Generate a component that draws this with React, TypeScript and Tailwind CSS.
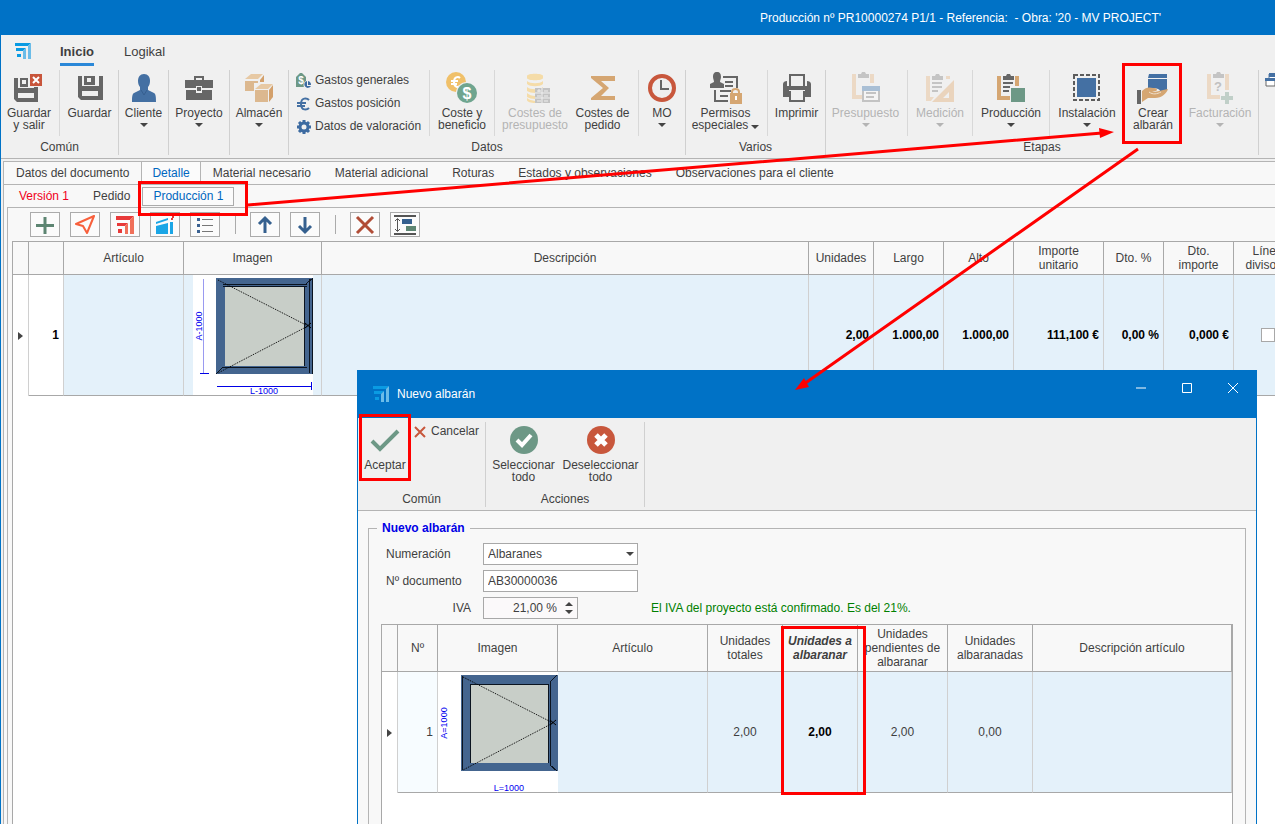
import React from 'react';

type Kids = { children?: React.ReactNode };

function Svg({ w = 32, h = 32, children }: Kids & { w?: number; h?: number }) {
  return (
    <svg width={w} height={h} viewBox={`0 0 ${w} ${h}`} className="block shrink-0" aria-hidden="true">
      {children}
    </svg>
  );
}

function Logo() {
  return (
    <Svg w={16} h={16}>
      <path d="M0 0h16l-3 3H0z" fill="#0a9be3" />
      <path d="M16 0v16h-3V3z" fill="#6bbce8" />
      <path d="M1 5h10l-3 3H1z" fill="#0a9be3" />
      <path d="M11 5v11H8V8z" fill="#6bbce8" />
      <path d="M2 11h4v3H2z" fill="#0a9be3" />
    </Svg>
  );
}

const SaveIcon = () => (
  <Svg>
    <path d="M4 4h4v10h17V4h4v24H7l-3-3z" fill="#666" />
    <path d="M10 4h11v9H10z" fill="#666" />
    <path d="M13 6h4v4h-4z" fill="#efefef" />
    <path d="M8 19h16v5H8z" fill="#efefef" />
  </Svg>
);

const SaveExitIcon = () => (
  <Svg>
    <path d="M1 6h4v10h16v-1h4v15H4l-3-3z" fill="#666" />
    <path d="M7 6h8v9H7z" fill="#666" />
    <path d="M9 8h4v4H9z" fill="#efefef" />
    <path d="M5 21h16v5H5z" fill="#efefef" />
    <path d="M16 1h14v14H16z" fill="#efefef" />
    <path d="M17 2h12v12H17z" fill="#c8553b" />
    <path d="M20 5l6 6M26 5l-6 6" stroke="#fff" strokeWidth="2" />
  </Svg>
);

const PersonIcon = () => (
  <Svg>
    <path d="M16 2c4 0 6 3 6 7 0 3-1 5-2 6v3l6 3c2 1 2 5 2 9H4c0-4 0-8 2-9l6-3v-3c-1-1-2-3-2-6 0-4 2-7 6-7z" fill="#4470a3" />
    <path d="M13 18l3 5 3-5" fill="none" stroke="#365f90" />
  </Svg>
);

const CaseIcon = () => (
  <Svg>
    <path d="M12 8V5h8v3" fill="none" stroke="#666" strokeWidth="2" />
    <path d="M2 8h28v8H19v-2h-6v2H2zM3 18h10v3h6v-3h10v10H3z" fill="#666" />
    <path d="M14 15h4v4h-4z" fill="#666" />
  </Svg>
);

const BoxesIcon = () => (
  <Svg>
    <path d="M2 7l6-5h12l-5 5z" fill="#e7c9a4" />
    <path d="M2 9h13v10H2z" fill="#dcb88f" />
    <path d="M17 8l4-5v7h-4z" fill="#d3a06b" />
    <path d="M11 11h20v20H11z" fill="#f0f0f0" />
    <path d="M12 17l6-5h12l-5 5z" fill="#e7c9a4" />
    <path d="M12 18h13v12H12z" fill="#dcb88f" />
    <path d="M26 18l4-5v12l-4 5z" fill="#d3a06b" />
  </Svg>
);

const CoinText = ({ x, y, c, s, f = '#fff' }: { x: number; y: number; c: string; s: number; f?: string }) => (
  <text x={x} y={y} fontSize={s} fontWeight="700" textAnchor="middle" fill={f} fontFamily="Liberation Sans, sans-serif">
    {c}
  </text>
);

const TagMoneyIcon = () => (
  <Svg w={16} h={16}>
    <path d="M0 4l4-4h2l4 4v10H0z" fill="#6d9886" />
    <CoinText x={5} y={11} c="$" s={10} />
    <circle cx="12" cy="12" r="4.500" fill="#f0f0f0" />
    <path d="M11 8v5h4a3.500 3.500 0 1 1-4-5z" fill="#3d6ba1" />
    <path d="M12 8a4 4 0 0 1 3 4h-3z" fill="#3d6ba1" />
  </Svg>
);

const EuroIcon = () => (
  <Svg w={16} h={16}>
    <path d="M13 4C11 2 5 1 5 8s6 6 8 4M1 7h9M1 10h8" fill="none" stroke="#4470a3" strokeWidth="2" />
  </Svg>
);

const GearIcon = () => (
  <Svg w={16} h={16}>
    <circle cx="8" cy="8" r="4" fill="none" stroke="#3d6ba1" strokeWidth="3" />
    <path d="M8 1v3M8 12v3M1 8h3M12 8h3M3 3l2 2M11 11l2 2M13 3l-2 2M5 11l-2 2" stroke="#3d6ba1" strokeWidth="3" />
  </Svg>
);

const CoinsIcon = () => (
  <Svg>
    <circle cx="10" cy="10" r="10" fill="#f0c069" />
    <path d="M14 6c-2-2-6-1-6 4s4 6 6 4M5 9h7M5 12h6" fill="none" stroke="#fff" strokeWidth="2" />
    <circle cx="21" cy="21" r="11" fill="#f0f0f0" />
    <circle cx="21" cy="21" r="10" fill="#6fa58f" />
    <CoinText x={21} y={27} c="$" s={16} />
  </Svg>
);

const CoinStackIcon = () => (
  <Svg>
    <g fill="#f5dca8">
      <path d="M8 4c0-3 16-3 16 0v2c0 3-16 3-16 0z" />
      <path d="M8 9c3 3 13 3 16 0v3c-3 3-13 3-16 0zM8 15c3 3 13 3 16 0v1h-8v5c-3 0-6-1-8-2zM8 21c2 2 5 3 8 3v3c-3 0-6-1-8-2zM8 26c2 2 5 2 8 3v2c-4 0-8-1-8-3z" />
    </g>
    <path d="M16 16h15v15H16z" fill="#c3c3c3" />
    <path d="M23 16v15M16 21h15M16 26h15" stroke="#f0f0f0" />
    <path d="M18 19h4M20 17v3M25 19h4M18 24h4M25 24h4M18 29h4M25 29h4" stroke="#f0f0f0" />
  </Svg>
);

const SigmaIcon = () => (
  <Svg>
    <path d="M4 4h24v5H14l8 7-8 8h14v4H4v-2l12-10L4 6z" fill="#d5a672" />
  </Svg>
);

const ClockIcon = () => (
  <Svg>
    <circle cx="16" cy="16" r="12" fill="#efefef" stroke="#c8573c" strokeWidth="4" />
    <path d="M15 8v9h8" fill="none" stroke="#666" strokeWidth="2" />
  </Svg>
);

const PermsIcon = () => (
  <Svg>
    <path d="M7 0c3 0 4 2 4 5 0 2-1 3-1 5l4 2v4H0v-4l4-2C4 8 3 7 3 5c0-3 1-5 4-5z" fill="#666" />
    <path d="M13 5h14v11M5 18v11h13" fill="none" stroke="#666" strokeWidth="2" />
    <path d="M15 10h8M15 14h8M10 19h11M10 24h8" stroke="#666" strokeWidth="2" />
    <path d="M22 22v-2c0-4 7-4 7 0v2" fill="none" stroke="#d5a672" strokeWidth="2" />
    <path d="M20 21h12v11H20z" fill="#d5a672" />
    <path d="M25 24h2v4h-2z" fill="#fff" />
  </Svg>
);

const PrinterIcon = () => (
  <Svg>
    <path d="M9 14V3h14v11" fill="none" stroke="#666" strokeWidth="2" />
    <path d="M2 12c0-2 2-3 4-3v5h20V9c2 0 4 1 4 3v13h-6v-7H8v7H2z" fill="#666" />
    <path d="M9 19v10h14V19" fill="none" stroke="#666" strokeWidth="2" />
  </Svg>
);

const BudgetIcon = () => (
  <Svg>
    <path d="M2 2h4v21h6v4H2zM20 2h4v9h-4z" fill="#ecd9c5" />
    <path d="M8 2h3l1-2h3l1 2h3v4H8z" fill="#c4c4c4" />
    <path d="M12 14h18v16H12z" fill="#c3c3c3" />
    <path d="M12 14h18v5H12z" fill="#a9bfd5" />
    <path d="M14 19h14v9H14z" fill="#f4f4f4" />
    <path d="M16 21h10M16 25h8" stroke="#c3c3c3" strokeWidth="2" />
  </Svg>
);

const MeasureIcon = () => (
  <Svg>
    <path d="M2 4h4v21h4l-3 4H2zM22 4h4v3h-4z" fill="#ecd9c5" />
    <path d="M8 4h3l1-2h3l1 2h3v4H8z" fill="#c4c4c4" />
    <path d="M8 11h10M8 15h10M8 19h6" stroke="#c4c4c4" strokeWidth="2" />
    <path d="M30 8v22H8zM25 20l-6 6h6z" fill="#ead4bd" fillRule="evenodd" />
  </Svg>
);

const ProductionIcon = () => (
  <Svg>
    <path d="M2 4h4v20h9v4H2zM20 4h4v10h-4z" fill="#d5a672" />
    <path d="M8 4h3l1-2h3l1 2h3v4H8z" fill="#666" />
    <path d="M8 11h10M8 15h7M8 19h6" stroke="#666" strokeWidth="2" />
    <path d="M16 16h14v14H16z" fill="#6d9886" />
  </Svg>
);

const InstallIcon = () => (
  <Svg>
    <path d="M3 3h25v25H3z" fill="none" stroke="#5c5c5c" strokeWidth="2" strokeDasharray="4 2" />
    <path d="M6 6h19v19H6z" fill="#4470a3" />
  </Svg>
);

const DeliveryIcon = () => (
  <Svg>
    <path d="M12 2h18v4H11zM11 7h19v12h-7c0-2-4-3-8-3h-4z" fill="#4470a3" />
    <path d="M0 18h4v14H0z" fill="#666" />
    <path d="M5 19c4-4 7-4 11-3 4 0 5 2 3 3h-4c5 2 9-1 16-2-1 4-6 9-13 9h-7l-6 4z" fill="#d5a672" />
    <path d="M12 20c4 3 8 2 12 0" fill="none" stroke="#f0e0cc" />
  </Svg>
);

const InvoiceIcon = () => (
  <Svg>
    <path d="M3 2h4v21h9v4H3zM21 2h4v16h-4z" fill="#ecd9c5" />
    <path d="M9 2h3l1-2h3l1 2h3v4H9z" fill="#c4c4c4" />
    <CoinText x={14} y={19} c="?" s={13} f="#c0c0c0" />
    <path d="M21 20h4v4h4v4h-4v4h-4v-4h-4v-4h4z" fill="#c0cfc8" />
  </Svg>
);

const CheckIcon = () => (
  <Svg>
    <path d="M3 17l8 8L29 7" fill="none" stroke="#6d9886" strokeWidth="4" />
  </Svg>
);

const CheckCircleIcon = () => (
  <Svg>
    <circle cx="16" cy="16" r="14" fill="#6d9886" />
    <path d="M9 16l5 5 9-10" fill="none" stroke="#fff" strokeWidth="4" />
  </Svg>
);

const CrossCircleIcon = () => (
  <Svg>
    <circle cx="16" cy="16" r="14" fill="#c8573c" />
    <path d="M11 11l10 10M21 11L11 21" fill="none" stroke="#fff" strokeWidth="5" />
  </Svg>
);

function Caret({ off }: { off?: boolean }) {
  return (
    <svg width="8" height="4" viewBox="0 0 8 4" className="inline-block shrink-0" aria-hidden="true">
      <path d="M0 0h8L4 4z" fill={off ? '#b4b4b4' : '#444'} />
    </svg>
  );
}

function Group({ label, width, children }: Kids & { label?: string; width: string }) {
  return (
    <section className={`flex h-[85px] shrink-0 flex-col justify-between border-r border-[#d0d0d0] ${width}`}>
      <div className="flex">{children}</div>
      {label && <div className="text-center leading-4">{label}</div>}
    </section>
  );
}

type ItemProps = { icon: React.ReactNode; lines: string[]; width: string; menu?: boolean; inlineMenu?: boolean; off?: boolean; sep?: boolean };

function Item({ icon, lines, width, menu, inlineMenu, off, sep }: ItemProps) {
  return (
    <button
      type="button"
      disabled={off}
      className={`flex h-[66px] shrink-0 flex-col items-center pt-[2px] ${width} ${sep ? 'border-r border-[#d8d8d8]' : ''} ${off ? 'text-[#b4b4b4]' : ''}`}
    >
      {icon}
      <span className="mt-[3px] block text-center leading-3 whitespace-nowrap">
        {lines.map((l, i) => (
          <span key={l} className="block">
            {l}
            {inlineMenu && i === lines.length - 1 && (
              <span className="ml-[3px] inline-flex h-2 items-center">
                <Caret />
              </span>
            )}
          </span>
        ))}
      </span>
      {menu && (
        <span className="flex h-3 items-center">
          <Caret off={off} />
        </span>
      )}
    </button>
  );
}

function SmallItem({ icon, label }: { icon: React.ReactNode; label: string }) {
  return (
    <button type="button" className="flex items-center gap-[3px] leading-[19px] whitespace-nowrap">
      {icon}
      {label}
    </button>
  );
}

function ToolButton({ label, children }: Kids & { label: string }) {
  return (
    <button type="button" aria-label={label} className="flex h-[25px] w-[30px] shrink-0 items-center justify-center border border-[#ababab] bg-[#fbfbfb]">
      <Svg w={24} h={20}>
        {children}
      </Svg>
    </button>
  );
}

const ToolSep = () => (
  <span className="flex h-[19px] w-[10px] justify-center">
    <span className="w-px bg-[#ababab]" />
  </span>
);

function WindowDrawing({ dimensions }: { dimensions?: boolean }) {
  const mark = dimensions ? '-' : '=';
  return (
    <svg width="120" height="120" viewBox="0 0 120 120" className="block bg-white" role="img" aria-label="Ventana">
      <path d="M23 3h97v96H23z" fill="#44658f" />
      <path d="M32 12h79v79H32z" fill="#c8cec8" />
      <g fill="none" stroke="#0b1420" shapeRendering="crispEdges">
        {dimensions ? (
          <>
            <path d="M30 9.500h84M30 11.500h84M111.500 12v79M30 92.500h84M116.500 4v94M119.500 3v96" />
            <path d="M23 99l7-7M113 9l7-6" />
          </>
        ) : (
          <>
            <path d="M32.500 12v79M32 12.500h79M110.500 12v79M112.500 9v84M24.500 4v94" />
            <path d="M112 10l7-7M112 93l7 6" />
          </>
        )}
      </g>
      <path d="M25 5l90 46L25 98" fill="none" stroke="#000" strokeDasharray="1 1" />
      <path d="M112 48l6 5M112 53l6-5" stroke="#000" />
      {dimensions && (
        <g shapeRendering="crispEdges">
          <path d="M10 4v95" stroke="#9a9af0" />
          <path d="M7 98h9M24 111h95M118 107v8" stroke="#0000e6" />
        </g>
      )}
      <g fill="#0000f0" fontSize="9" fontWeight="400" fontFamily="Liberation Sans, sans-serif">
        <text x="71" y="119" textAnchor="middle">{`L${mark}1000`}</text>
        <text transform="translate(9 51) rotate(-90)" textAnchor="middle">{`A${mark}1000`}</text>
      </g>
    </svg>
  );
}

const RowMarker = () => (
  <svg width="5" height="8" viewBox="0 0 5 8" className="mx-auto block" aria-hidden="true">
    <path d="M0 0l5 4-5 4z" fill="#444" />
  </svg>
);

function Th({ children, strong }: Kids & { strong?: boolean }) {
  return (
    <th className={`border-r border-b border-[#a8a8a8] bg-[#f8f8f8] p-0 text-center leading-[14px] whitespace-pre ${strong ? 'font-bold italic' : 'font-normal'}`}>
      {children}
    </th>
  );
}

function Td({ children, look = 'bg-[#e4f1fa]' }: Kids & { look?: string }) {
  return <td className={`border-r border-b border-r-[#d0d0d0] border-b-[#a8a8a8] p-0 ${look}`}>{children}</td>;
}

const mainCols = ['w-[16px]', 'w-[35px]', 'w-[120px]', 'w-[138px]', '', 'w-[65px]', 'w-[70px]', 'w-[70px]', 'w-[90px]', 'w-[60px]', 'w-[70px]', 'w-[68px]'];
const mainHeads = ['', '', 'Artículo', 'Imagen', 'Descripción', 'Unidades', 'Largo', 'Alto', 'Importe\nunitario', 'Dto. %', 'Dto.\nimporte', 'Línea\ndivisoria'];
const mainValues = ['2,00', '1.000,00', '1.000,00', '111,100 €', '0,00 %', '0,000 €'];

function MainTable() {
  return (
    <div className="ml-1 flex-1 overflow-hidden border-t border-l border-[#a8a8a8] bg-white">
      <table className="w-full min-w-[1289px] table-fixed border-separate border-spacing-0">
        <colgroup>
          {mainCols.map((c, i) => (
            <col key={i} className={c} />
          ))}
        </colgroup>
        <thead>
          <tr className="h-[33px]">
            {mainHeads.map((h, i) => (
              <Th key={i}>{h}</Th>
            ))}
          </tr>
        </thead>
        <tbody>
          <tr className="h-[121px] font-bold text-black">
            <td className="border-r border-[#d0d0d0] p-0">
              <RowMarker />
            </td>
            <Td look="bg-white pr-1 text-right">1</Td>
            <Td />
            <Td look="bg-[#e4f1fa] pl-[9px]">
              <WindowDrawing dimensions />
            </Td>
            <Td />
            {mainValues.map((v, i) => (
              <Td key={i} look="bg-[#e4f1fa] pr-1 text-right">
                {v}
              </Td>
            ))}
            <Td>
              <input type="checkbox" aria-label="Línea divisoria" className="mx-auto block size-[14px] appearance-none border border-[#a8a8a8] bg-white" />
            </Td>
          </tr>
        </tbody>
      </table>
    </div>
  );
}

const noteCols = ['w-[16px]', 'w-[40px]', 'w-[120px]', 'w-[150px]', 'w-[75px]', 'w-[75px]', 'w-[90px]', 'w-[85px]', ''];
const noteHeads = ['', 'Nº', 'Imagen', 'Artículo', 'Unidades\ntotales', 'Unidades a\nalbaranar', 'Unidades\npendientes de\nalbaranar', 'Unidades\nalbaranadas', 'Descripción artículo'];

function NoteTable() {
  return (
    <div className="mt-[5px] flex-1 overflow-hidden border border-b-0 border-[#a8a8a8] bg-white">
      <table className="w-full table-fixed border-separate border-spacing-0">
        <colgroup>
          {noteCols.map((c, i) => (
            <col key={i} className={c} />
          ))}
        </colgroup>
        <thead>
          <tr className="h-[47px]">
            {noteHeads.map((h, i) => (
              <Th key={i} strong={i === 5}>
                {h}
              </Th>
            ))}
          </tr>
        </thead>
        <tbody>
          <tr className="h-[121px] text-center">
            <td className="border-r border-[#d0d0d0] p-0">
              <RowMarker />
            </td>
            <Td look="bg-[#f7fcff] pr-1 text-right">1</Td>
            <Td look="bg-white">
              <WindowDrawing />
            </Td>
            <Td />
            <Td>2,00</Td>
            <Td look="bg-[#e4f1fa] font-bold text-black">2,00</Td>
            <Td>2,00</Td>
            <Td>0,00</Td>
            <Td />
          </tr>
        </tbody>
      </table>
    </div>
  );
}

function Dialog() {
  return (
    <div role="dialog" aria-label="Nuevo albarán" className="absolute top-[370px] right-[18px] bottom-0 left-[356px] flex flex-col overflow-hidden border-x border-[#0072c6] bg-[#f8f8f8]">
      <header className="flex h-12 shrink-0 items-center bg-[#0072c6] pl-[15px] text-white">
        <Logo />
        <h2 className="ml-2 flex-1">Nuevo albarán</h2>
        <div className="flex self-start">
          {[
            ['Minimizar', 'M1 6h10'],
            ['Maximizar', 'M1.500 1.500h9v9h-9z'],
            ['Cerrar', 'M1 1l10 10M11 1L1 11'],
          ].map(([label, d]) => (
            <button key={label} type="button" aria-label={label} className="flex h-[35px] w-[46px] items-center justify-center">
              <Svg w={12} h={12}>
                <path d={d} fill="none" stroke="#fff" />
              </Svg>
            </button>
          ))}
        </div>
      </header>
      <div className="flex h-[93px] shrink-0 border-b border-[#b4b4b4] bg-[#f0f0f0] pt-1">
        <Group label="Común" width="w-[128px]">
          <Item icon={<CheckIcon />} lines={['Aceptar']} width="w-[54px]" />
          <div className="pl-[2px]">
            <button type="button" className="flex items-center gap-[5px] leading-[19px]">
              <Svg w={12} h={12}>
                <path d="M1 1l10 10M11 1L1 11" stroke="#c8573c" strokeWidth="2" />
              </Svg>
              Cancelar
            </button>
          </div>
        </Group>
        <Group label="Acciones" width="w-[159px]">
          <Item icon={<CheckCircleIcon />} lines={['Seleccionar', 'todo']} width="w-[75px]" />
          <Item icon={<CrossCircleIcon />} lines={['Deseleccionar', 'todo']} width="w-[79px]" />
        </Group>
      </div>
      <fieldset className="mx-[10px] mt-[9px] flex flex-1 flex-col border border-b-0 border-[#b4b4b4] px-3">
        <legend className="-ml-1 px-[5px] leading-4 font-bold text-[#0000e6]">Nuevo albarán</legend>
        <div className="flex flex-col gap-[5px] pt-[7px]">
          <div className="flex items-center">
            <label htmlFor="numeracion" className="w-[102px] pl-[5px]">Numeración</label>
            <span className="relative">
              <select id="numeracion" className="block h-[22px] w-[155px] appearance-none border border-[#a8a8a8] bg-white pl-1">
                <option>Albaranes</option>
              </select>
              <span className="pointer-events-none absolute inset-y-0 right-1 flex items-center">
                <Caret />
              </span>
            </span>
          </div>
          <div className="flex items-center">
            <label htmlFor="documento" className="w-[102px] pl-[5px]">Nº documento</label>
            <input id="documento" defaultValue="AB30000036" className="h-[22px] w-[155px] border border-[#a8a8a8] bg-white pl-1" />
          </div>
          <div className="flex items-center">
            <label htmlFor="iva" className="w-[102px] pr-3 text-right">IVA</label>
            <div className="flex h-[22px] w-[95px] items-center border border-[#a8a8a8] bg-[#fbf9fa] pr-1">
              <input id="iva" defaultValue="21,00 %" className="min-w-0 flex-1 bg-transparent pr-2 text-right" />
              <span className="flex flex-col gap-1">
                <button type="button" aria-label="Subir" className="flex rotate-180"><Caret /></button>
                <button type="button" aria-label="Bajar" className="flex"><Caret /></button>
              </span>
            </div>
            <p className="ml-[73px] text-[#008000]">El IVA del proyecto está confirmado. Es del 21%.</p>
          </div>
        </div>
        <NoteTable />
      </fieldset>
    </div>
  );
}

function Annotations() {
  return (
    <div className="pointer-events-none absolute inset-y-0 right-0 -left-px overflow-hidden">
      <svg width="1275" height="824" viewBox="0 0 1275 824" className="block" aria-hidden="true">
        <g fill="none" stroke="#f00" strokeWidth="3">
          <rect x="139.500" y="182.500" width="107" height="32" />
          <rect x="1123.500" y="64.500" width="57" height="78" />
          <rect x="360.500" y="415.500" width="49" height="64" />
          <rect x="782.500" y="627.500" width="82" height="166" />
          <path d="M248 205L1102 133M1138 149L804 384" />
        </g>
        <path d="M1114 132l-15-4 1 10zM795 390l9-12 5 9z" fill="#f00" />
      </svg>
    </div>
  );
}

export default function App() {
  return (
    <div className="relative flex h-screen flex-col overflow-hidden border-l border-[#0072c6] bg-white font-['Liberation_Sans',Arial,sans-serif] text-[12px] leading-4 text-[#3f3f3f]">
      <header className="flex h-[35px] shrink-0 items-center bg-[#0072c6] pl-[759px] whitespace-nowrap text-white">
        <h1 className="whitespace-pre">Producción nº PR10000274 P1/1 - Referencia:  - Obra: '20 - MV PROJECT'</h1>
      </header>

      <div className="shrink-0 border-b border-[#b4b4b4] bg-[#f0f0f0] pb-[3px]">
        <nav className="flex h-[35px] items-start pt-2 pl-[14px]">
          <Logo />
          <button type="button" className="ml-[29px] h-[23px] border-b-[3px] border-[#2b88d8] pb-[3px] text-[13px] font-bold">Inicio</button>
          <button type="button" className="ml-[30px] h-[17px] text-[13px]">Logikal</button>
        </nav>
        <div className="flex">
          <Group label="Común" width="w-[118px]">
            <Item icon={<SaveExitIcon />} lines={['Guardar', 'y salir']} width="w-[59px] pr-[2px]" sep />
            <Item icon={<SaveIcon />} lines={['Guardar']} width="w-[59px]" />
          </Group>
          <Group width="w-[50px]">
            <Item icon={<PersonIcon />} lines={['Cliente']} width="w-[49px]" menu />
          </Group>
          <Group width="w-[61px]">
            <Item icon={<CaseIcon />} lines={['Proyecto']} width="w-[60px]" menu />
          </Group>
          <Group width="w-[59px]">
            <Item icon={<BoxesIcon />} lines={['Almacén']} width="w-[58px]" menu />
          </Group>
          <Group label="Datos" width="w-[397px]">
            <div className="flex h-[66px] w-[141px] shrink-0 flex-col gap-1 border-r border-[#d8d8d8] pt-px pl-[7px]">
              <SmallItem icon={<TagMoneyIcon />} label="Gastos generales" />
              <SmallItem icon={<EuroIcon />} label="Gastos posición" />
              <SmallItem icon={<GearIcon />} label="Datos de valoración" />
            </div>
            <Item icon={<CoinsIcon />} lines={['Coste y', 'beneficio']} width="w-[65px]" sep />
            <Item icon={<CoinStackIcon />} lines={['Costes de', 'presupuesto']} width="w-[80px]" off />
            <Item icon={<SigmaIcon />} lines={['Costes de', 'pedido']} width="w-[64px] pr-2" sep />
            <Item icon={<ClockIcon />} lines={['MO']} width="w-[46px]" menu />
          </Group>
          <Group label="Varios" width="w-[140px]">
            <Item icon={<PermsIcon />} lines={['Permisos', 'especiales']} width="w-[82px] pr-[2px]" inlineMenu sep />
            <Item icon={<PrinterIcon />} lines={['Imprimir']} width="w-[57px]" />
          </Group>
          <Group label="Etapas" width="w-[433px]">
            <Item icon={<BudgetIcon />} lines={['Presupuesto']} width="w-[82px] pr-[2px]" menu off sep />
            <Item icon={<MeasureIcon />} lines={['Medición']} width="w-[65px]" menu off sep />
            <Item icon={<ProductionIcon />} lines={['Producción']} width="w-[77px]" menu sep />
            <Item icon={<InstallIcon />} lines={['Instalación']} width="w-[74px]" menu />
            <Item icon={<DeliveryIcon />} lines={['Crear', 'albarán']} width="w-[58px]" />
            <Item icon={<InvoiceIcon />} lines={['Facturación']} width="w-[76px]" menu off />
          </Group>
          <button type="button" aria-label="Ventanas" className="mt-[2px] ml-[6px] h-4 w-4 shrink-0 overflow-hidden">
            <Svg w={16} h={16}>
              <path d="M4 2h11v10H4z" fill="#fff" stroke="#5c7fa8" />
              <path d="M4 1h11v4H4z" fill="#4470a3" />
              <path d="M1 7h9v7H1z" fill="#fff" stroke="#666" />
              <path d="M0 6h10v3H0z" fill="#4470a3" />
            </Svg>
          </button>
        </div>
      </div>

      <main className="flex min-h-0 flex-1 flex-col bg-[#f0f0f0] pt-[2px] pl-[2px]">
        <div className="flex flex-1 flex-col border-t border-l border-[#b4b4b4] bg-[#f8f8f8]">
          <nav className="flex h-[23px] shrink-0 items-stretch border-b border-[#b4b4b4] whitespace-nowrap">
            <button type="button" className="px-3">Datos del documento</button>
            <button type="button" className="border-x border-[#b4b4b4] bg-[#fbfbfb] px-[10px] text-[#0067c0]">Detalle</button>
            {['Material necesario', 'Material adicional', 'Roturas', 'Estados y observaciones', 'Observaciones para el cliente'].map((t) => (
              <button key={t} type="button" className="px-3">
                {t}
              </button>
            ))}
          </nav>
          <div className="flex flex-1 flex-col pl-[3px]">
            <nav className="flex h-[22px] items-center">
              <button type="button" className="px-3 text-[#f00020]">Versión 1</button>
              <button type="button" className="px-3">Pedido</button>
              <button type="button" className="h-[19px] border border-[#ababab] bg-[#fbfbfb] px-[10px] text-[#0067c0]">Producción 1</button>
            </nav>
            <div className="flex flex-1 flex-col border-t border-l border-[#b4b4b4]">
              <div className="flex h-[33px] shrink-0 items-center gap-[10px] pl-[22px]">
                <ToolButton label="Añadir">
                  <path d="M12 2v17M3 10.500h18" stroke="#5d8572" strokeWidth="3" />
                </ToolButton>
                <ToolButton label="Enviar">
                  <path d="M21 1L3 9l7 2 4 7z" fill="none" stroke="#f8603c" strokeWidth="2" strokeLinejoin="round" />
                </ToolButton>
                <ToolButton label="Logikal">
                  <path d="M3 1h18l-4 4H3z" fill="#e83a3a" />
                  <path d="M21 1v18h-4V5z" fill="#f0705a" />
                  <path d="M4 8h11l-3 3H4z" fill="#e83a3a" />
                  <path d="M15 8v11h-3v-8z" fill="#f0705a" />
                  <path d="M5 14h4v4H5z" fill="#e83a3a" />
                </ToolButton>
                <ToolButton label="Gráfico">
                  <path d="M3 11l12-3v11H3zM17 7h3v12h-3zM3 7l12-4v2L3 9z" fill="#1ba6e6" />
                  <path d="M18 3h2v2h-2zM19 1h2v2h-2z" fill="#e83a3a" />
                </ToolButton>
                <ToolButton label="Lista">
                  <path d="M4 4.500h3M4 10.500h3M4 16.500h3" stroke="#3b6292" strokeWidth="3" />
                  <path d="M9 4.500h11M9 10.500h11M9 16.500h11" stroke="#777" />
                </ToolButton>
                <ToolSep />
                <ToolButton label="Subir línea">
                  <path d="M12 18V4M6 9l6-6 6 6" fill="none" stroke="#35608f" strokeWidth="3" />
                </ToolButton>
                <ToolButton label="Bajar línea">
                  <path d="M12 2v14M6 11l6 6 6-6" fill="none" stroke="#35608f" strokeWidth="3" />
                </ToolButton>
                <ToolSep />
                <ToolButton label="Eliminar">
                  <path d="M4 2l16 16M20 2L4 18" stroke="#b14d37" strokeWidth="3" />
                </ToolButton>
                <ToolButton label="Altura de fila">
                  <path d="M1 1h22M1 19h22" stroke="#555" strokeWidth="2" />
                  <path d="M4.500 4v12M2 6l2.500-2.500L7 6M2 14l2.500 2.500L7 14" fill="none" stroke="#555" />
                  <path d="M9 4h10v5H9z" fill="#35608f" />
                  <path d="M13 11h10v5H13z" fill="#5d8572" />
                </ToolButton>
              </div>
              <MainTable />
            </div>
          </div>
        </div>
      </main>

      <Dialog />
      <Annotations />
    </div>
  );
}
